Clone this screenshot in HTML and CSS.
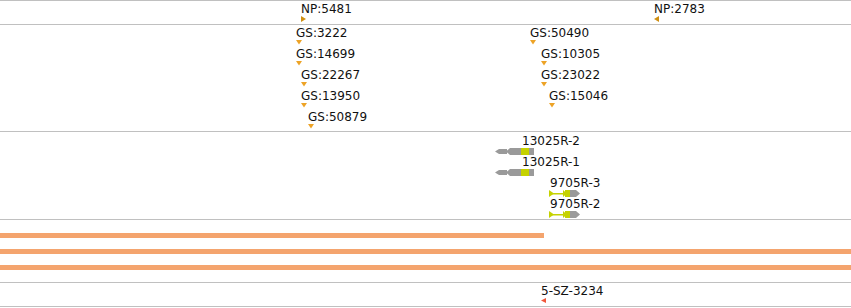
FILE: index.html
```html
<!DOCTYPE html>
<html lang="en">
<head>
  <meta charset="UTF-8" />
  <title>Tracks</title>
  <link rel="stylesheet" href="styles.css">
</head>
<body>
  <div class="browser">
    <!-- track: NP -->
    <div class="track track-np">
      <div class="feat" style="left:301px; top:1px;">
        <span class="label">NP:5481</span>
        <svg class="mark" width="5" height="6"><polygon points="0,0 5,3 0,6" class="np"/></svg>
      </div>
      <div class="feat" style="left:654px; top:1px;">
        <span class="label">NP:2783</span>
        <svg class="mark" width="5" height="6"><polygon points="5,0 0,3 5,6" class="np"/></svg>
      </div>
    </div>

    <!-- track: GS -->
    <div class="track track-gs">
      <div class="feat" style="left:296px; top:1px;">
        <span class="label">GS:3222</span>
        <svg class="mark" width="7" height="5"><polygon points="0,0 6,0 3,4.5" class="gs"/></svg>
      </div>
      <div class="feat" style="left:296px; top:22px;">
        <span class="label">GS:14699</span>
        <svg class="mark" width="7" height="5"><polygon points="0,0 6,0 3,4.5" class="gs"/></svg>
      </div>
      <div class="feat" style="left:301px; top:43px;">
        <span class="label">GS:22267</span>
        <svg class="mark" width="7" height="5"><polygon points="0,0 6,0 3,4.5" class="gs"/></svg>
      </div>
      <div class="feat" style="left:301px; top:64px;">
        <span class="label">GS:13950</span>
        <svg class="mark" width="7" height="5"><polygon points="0,0 6,0 3,4.5" class="gs"/></svg>
      </div>
      <div class="feat" style="left:308px; top:85px;">
        <span class="label">GS:50879</span>
        <svg class="mark" width="7" height="5"><polygon points="0,0 6,0 3,4.5" class="gs"/></svg>
      </div>
      <div class="feat" style="left:530px; top:1px;">
        <span class="label">GS:50490</span>
        <svg class="mark" width="7" height="5"><polygon points="0,0 6,0 3,4.5" class="gs"/></svg>
      </div>
      <div class="feat" style="left:541px; top:22px;">
        <span class="label">GS:10305</span>
        <svg class="mark" width="7" height="5"><polygon points="0,0 6,0 3,4.5" class="gs"/></svg>
      </div>
      <div class="feat" style="left:541px; top:43px;">
        <span class="label">GS:23022</span>
        <svg class="mark" width="7" height="5"><polygon points="0,0 6,0 3,4.5" class="gs"/></svg>
      </div>
      <div class="feat" style="left:549px; top:64px;">
        <span class="label">GS:15046</span>
        <svg class="mark" width="7" height="5"><polygon points="0,0 6,0 3,4.5" class="gs"/></svg>
      </div>
    </div>

    <!-- track: genes -->
    <div class="track track-genes">
      <div class="feat" style="left:495px; top:2px;">
        <span class="label label-shift">13025R-2</span>
        <svg class="mark" width="40" height="7">
          <polygon points="0,3.5 4,1 12,1 12,6 4,6" class="cds"/>
          <polygon points="11,3.5 15,0 26,0 26,7 15,7" class="cds"/>
          <rect x="26" y="0" width="8" height="7" class="utr"/>
          <rect x="34" y="0" width="5" height="7" class="cds"/>
        </svg>
      </div>
      <div class="feat" style="left:495px; top:23px;">
        <span class="label label-shift">13025R-1</span>
        <svg class="mark" width="40" height="7">
          <polygon points="0,3.5 4,1 12,1 12,6 4,6" class="cds"/>
          <polygon points="11,3.5 15,0 26,0 26,7 15,7" class="cds"/>
          <rect x="26" y="0" width="8" height="7" class="utr"/>
          <rect x="34" y="0" width="5" height="7" class="cds"/>
        </svg>
      </div>
      <div class="feat" style="left:549px; top:44px;">
        <span class="label label-nudge">9705R-3</span>
        <svg class="mark" width="32" height="7">
          <polygon points="0,0 5,3.5 0,7" class="utr"/>
          <rect x="3" y="3" width="11" height="1.5" class="utr"/>
          <polygon points="14,0 18,3.5 14,7" class="utr"/>
          <rect x="16" y="0" width="5" height="7" class="utr"/>
          <polygon points="21,0 27,0 31,3.5 27,7 21,7" class="cds"/>
        </svg>
      </div>
      <div class="feat" style="left:549px; top:65px;">
        <span class="label label-nudge">9705R-2</span>
        <svg class="mark" width="32" height="7">
          <polygon points="0,0 5,3.5 0,7" class="utr"/>
          <rect x="3" y="3" width="11" height="1.5" class="utr"/>
          <polygon points="14,0 18,3.5 14,7" class="utr"/>
          <rect x="16" y="0" width="5" height="7" class="utr"/>
          <polygon points="21,0 27,0 31,3.5 27,7 21,7" class="cds"/>
        </svg>
      </div>
    </div>

    <!-- track: coverage bars -->
    <div class="track track-bars">
      <div class="bar bar-short"></div>
      <div class="bar"></div>
      <div class="bar"></div>
    </div>

    <!-- track: SZ -->
    <div class="track track-sz">
      <div class="feat" style="left:541px; top:1px;">
        <span class="label">5-SZ-3234</span>
        <svg class="mark" width="5" height="5"><polygon points="5,0 0,2.5 5,5" class="sz"/></svg>
      </div>
    </div>
  </div>
</body>
</html>
```

FILE: styles.css
```css
body {
  margin: 0;
  padding: 0;
  background: #ffffff;
  font-family: "DejaVu Sans", Verdana, sans-serif;
  font-size: 12px;
  color: #111;
}
.browser {
  width: 851px;
  border-top: 1px solid #c0c0c0;
}
.track {
  position: relative;
  border-bottom: 1px solid #c0c0c0;
}
.track-np {
  height: 23px;
}
.track-gs {
  height: 106px;
}
.track-genes {
  height: 87px;
}
.track-bars {
  height: 63px;
  display: flex;
  flex-direction: column;
  gap: 11px;
  padding-top: 13px;
  box-sizing: border-box;
}
.track-sz {
  height: 23px;
}
.feat {
  position: absolute;
  white-space: nowrap;
}
.label {
  display: block;
  line-height: 14px;
}
.label-shift {
  margin-left: 27px;
}
.label-nudge {
  margin-left: 1px;
}
.mark {
  display: block;
}
.np {
  fill: #cf8f12;
}
.gs {
  fill: #eda326;
}
.sz {
  fill: #f0573a;
}
.cds {
  fill: #9a9a9a;
}
.utr {
  fill: #c5d200;
}
.bar {
  height: 5px;
  width: 100%;
  background: #f4a46e;
}
.bar-short {
  width: 544px;
}
```
